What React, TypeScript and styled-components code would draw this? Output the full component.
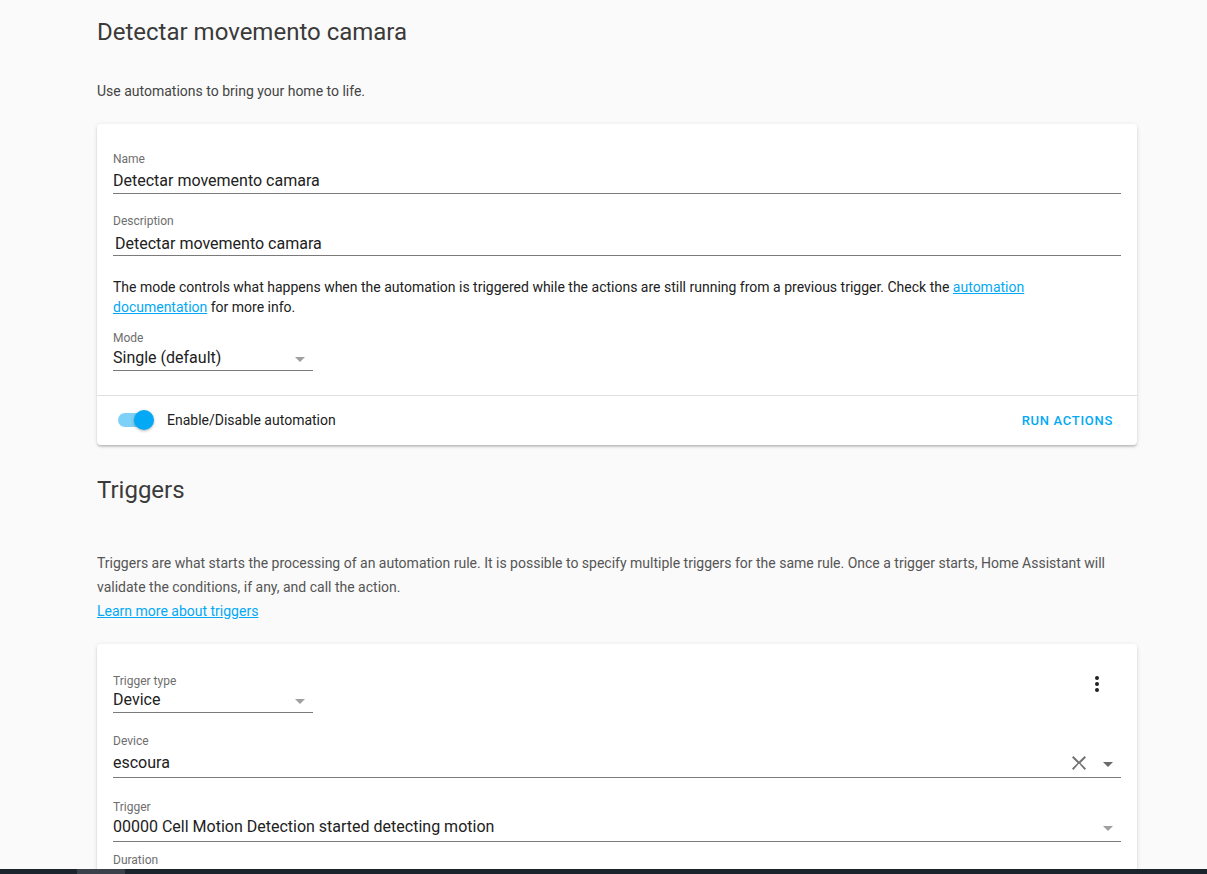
import React from "react";
import styled, { createGlobalStyle } from "styled-components";

const Global = createGlobalStyle`
  html, body { margin: 0; padding: 0; background: #fafafa; overflow: hidden; }
  body { font-family: Roboto, "Noto Sans", "Liberation Sans", sans-serif; color: #212121; }
`;

const Page = styled.div`
  padding: 16px 0 0 97px;
  width: 1040px;
  height: 874px;
  box-sizing: content-box;
`;

const Heading = styled.h1`
  margin: 0;
  font-size: 24px;
  font-weight: 400;
  line-height: 32px;
  color: #3a3a3a;
  letter-spacing: 0;
`;

const Intro = styled.p`
  margin: 33px 0 0 0;
  font-size: 14px;
  line-height: 20px;
  color: #444;
`;

const Card = styled.div<{ $mt: number }>`
  background: #fff;
  border-radius: 4px;
  box-shadow: 0 2px 2px 0 rgba(0,0,0,0.14), 0 1px 5px 0 rgba(0,0,0,0.10), 0 3px 1px -2px rgba(0,0,0,0.06);
  width: 1040px;
  margin-top: ${(p) => p.$mt}px;
`;

const CardBody = styled.div<{ $pt: number }>`
  padding: ${(p) => p.$pt}px 16px 24px 16px;
  display: flex;
  flex-direction: column;
  position: relative;
`;

const Field = styled.div<{ $w?: number; $mt?: number; $pb?: number; $plain?: boolean }>`
  width: ${(p) => (p.$w ? `${p.$w}px` : "100%")};
  margin-top: ${(p) => p.$mt ?? 0}px;
  border-bottom: ${(p) => (p.$plain ? "none" : "1px solid #7a7a7a")};
  padding-bottom: ${(p) => p.$pb ?? 2}px;
  display: flex;
  flex-direction: column;
`;

const Label = styled.div`
  font-size: 12px;
  line-height: 14px;
  color: #6e6e6e;
`;

const ValueRow = styled.div<{ $gap?: number }>`
  display: flex;
  align-items: center;
  margin-top: ${(p) => p.$gap ?? 5}px;
  height: 20px;
`;

const Value = styled.div<{ $indent?: number }>`
  flex: 1;
  font-size: 16px;
  line-height: 20px;
  color: #212121;
  padding-left: ${(p) => p.$indent ?? 0}px;
  white-space: nowrap;
`;

const Arrow = styled.span<{ $dark?: boolean }>`
  width: 0;
  height: 0;
  border-left: 5px solid transparent;
  border-right: 5px solid transparent;
  border-top: 5px solid ${(p) => (p.$dark ? "#6a6a6a" : "#a0a0a0")};
  margin-right: 8px;
  margin-top: 3px;
`;

const ClearIcon = styled.svg`
  width: 24px;
  height: 24px;
  margin-right: 12px;
  fill: #737373;
`;

const Para = styled.p`
  margin: 21px 0 0 0;
  font-size: 14px;
  line-height: 20px;
  color: #212121;
`;

const Link = styled.a`
  color: #03a9f4;
  text-decoration: underline;
`;

const Footer = styled.div`
  border-top: 1px solid #e0e0e0;
  height: 50px;
  display: flex;
  align-items: center;
  justify-content: space-between;
  padding: 0 24px 1px 21px;
  box-sizing: border-box;
`;

const ToggleWrap = styled.label`
  display: flex;
  align-items: center;
  gap: 15px;
  font-size: 14px;
  color: #212121;
`;

const Track = styled.span`
  position: relative;
  width: 34px;
  height: 14px;
  border-radius: 7px;
  background: #7dd0f7;
  display: inline-block;
`;

const Knob = styled.span`
  position: absolute;
  top: -3px;
  right: -2px;
  width: 20px;
  height: 20px;
  border-radius: 50%;
  background: #03a9f4;
  box-shadow: 0 1px 3px rgba(0,0,0,0.3);
`;

const TextButton = styled.button`
  border: none;
  background: none;
  font-family: inherit;
  font-size: 13px;
  font-weight: 500;
  letter-spacing: 0.7px;
  color: #03a9f4;
  text-transform: uppercase;
  padding: 0;
`;

const Section = styled.div`
  margin-top: 29px;
`;

const SectionText = styled.p`
  margin: 45px 0 0 0;
  font-size: 14px;
  line-height: 24px;
  color: #555;
`;

const MenuButton = styled.button`
  position: absolute;
  top: 28px;
  right: 28px;
  border: none;
  background: none;
  padding: 0;
  width: 24px;
  height: 24px;
  display: flex;
  align-items: center;
  justify-content: center;
  svg { fill: #212121; }
`;

const ScrollBar = styled.div`
  position: fixed;
  left: 0;
  right: 0;
  bottom: 0;
  height: 5px;
  background: #1b232d;
`;

const ScrollThumb = styled.div`
  position: absolute;
  left: 77px;
  width: 48px;
  top: 0;
  bottom: 0;
  background: #3b414b;
`;

export default function App() {
  return (
    <>
      <Global />
      <Page>
        <Heading>Detectar movemento camara</Heading>
        <Intro>Use automations to bring your home to life.</Intro>
        <Card $mt={23}>
          <CardBody $pt={28}>
            <Field>
              <Label>Name</Label>
              <ValueRow>
                <Value>Detectar movemento camara</Value>
              </ValueRow>
            </Field>
            <Field $mt={20} $pb={1}>
              <Label>Description</Label>
              <ValueRow $gap={6}>
                <Value $indent={2}>Detectar movemento camara</Value>
              </ValueRow>
            </Field>
            <Para>
              The mode controls what happens when the automation is triggered while the actions are still running from a previous trigger. Check the{" "}
              <Link href="#">automation documentation</Link> for more info.
            </Para>
            <Field $w={200} $mt={14} $pb={2}>
              <Label>Mode</Label>
              <ValueRow $gap={3}>
                <Value>Single (default)</Value>
                <Arrow />
              </ValueRow>
            </Field>
          </CardBody>
          <Footer>
            <ToggleWrap>
              <Track>
                <Knob />
              </Track>
              Enable/Disable automation
            </ToggleWrap>
            <TextButton>Run actions</TextButton>
          </Footer>
        </Card>
        <Section>
          <Heading>Triggers</Heading>
          <SectionText>
            Triggers are what starts the processing of an automation rule. It is possible to specify multiple triggers for the same rule. Once a trigger starts, Home Assistant will validate the conditions, if any, and call the action.
            <br />
            <Link href="#">Learn more about triggers</Link>
          </SectionText>
        </Section>
        <Card $mt={21}>
          <CardBody $pt={30}>
            <MenuButton aria-label="menu">
              <svg width="24" height="24" viewBox="0 0 24 24">
                <path d="M12,16A2,2 0 0,1 14,18A2,2 0 0,1 12,20A2,2 0 0,1 10,18A2,2 0 0,1 12,16M12,10A2,2 0 0,1 14,12A2,2 0 0,1 12,14A2,2 0 0,1 10,12A2,2 0 0,1 12,10M12,4A2,2 0 0,1 14,6A2,2 0 0,1 12,8A2,2 0 0,1 10,6A2,2 0 0,1 12,4Z" />
              </svg>
            </MenuButton>
            <Field $w={200} $pb={2}>
              <Label>Trigger type</Label>
              <ValueRow $gap={2}>
                <Value>Device</Value>
                <Arrow />
              </ValueRow>
            </Field>
            <Field $mt={21} $pb={4}>
              <Label>Device</Label>
              <ValueRow $gap={5}>
                <Value>escoura</Value>
                <ClearIcon viewBox="0 0 24 24">
                  <path d="M19,6.41L17.59,5L12,10.59L6.41,5L5,6.41L10.59,12L5,17.59L6.41,19L12,12.59L17.59,19L19,17.59L13.41,12L19,6.41Z" />
                </ClearIcon>
                <Arrow $dark />
              </ValueRow>
            </Field>
            <Field $mt={22} $pb={4}>
              <Label>Trigger</Label>
              <ValueRow $gap={3}>
                <Value>00000 Cell Motion Detection started detecting motion</Value>
                <Arrow />
              </ValueRow>
            </Field>
            <Field $mt={11} $plain>
              <Label>Duration</Label>
            </Field>
          </CardBody>
        </Card>
      </Page>
      <ScrollBar>
        <ScrollThumb />
      </ScrollBar>
    </>
  );
}
